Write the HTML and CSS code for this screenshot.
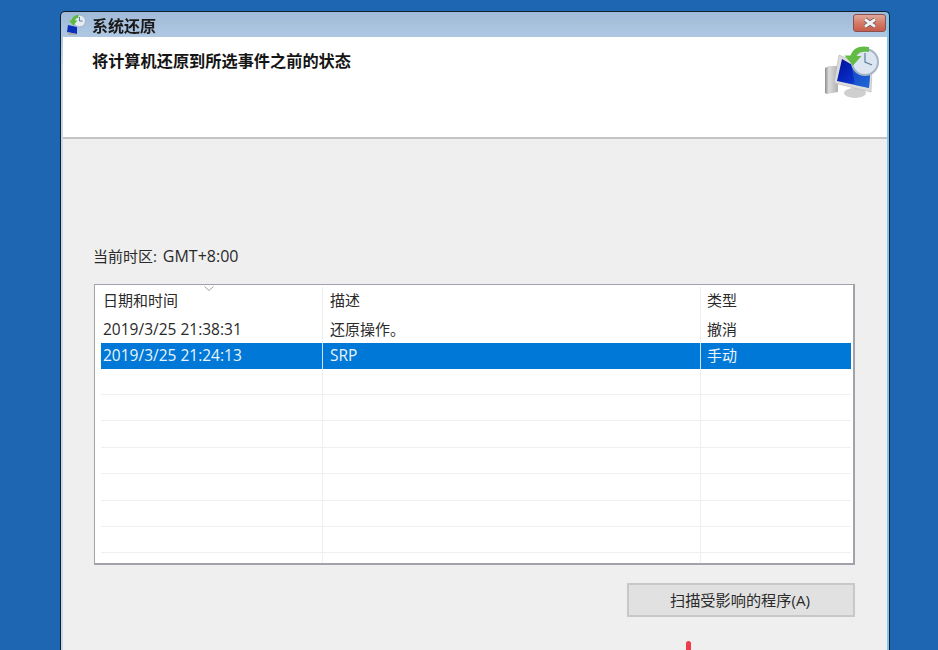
FILE: index.html
```html
<!DOCTYPE html>
<html lang="zh-CN">
<head>
<meta charset="utf-8">
<title>系统还原</title>
<link rel="stylesheet" href="styles.css">
</head>
<body>
<div class="window">
  <div class="titlebar">
    <svg class="title-icon" viewBox="0 0 20 22" width="20" height="22">
      <path d="M2 11l9 2v7l-10-2z" fill="#0a2fb8"/>
      <path d="M1 18l10 2-1 1H3z" fill="#a8a8a8"/>
      <circle cx="13.500" cy="7" r="6" fill="#e4ebf3" stroke="#9fb0c4"/>
      <path d="M13.500 3V7h3" fill="none" stroke="#5f7d9e"/>
      <path d="M12.500 1C8.500 1 6 3.500 5.500 6.500H3l4.200 5 4.300-5H9C9.500 5 10.700 4 12.500 3.800z" fill="#5dbb3c"/>
    </svg>
    <span class="title-text">系统还原</span>
    <button class="close" type="button" aria-label="关闭">
      <svg viewBox="0 0 16 12" width="16" height="12">
        <path d="M3 2.500 13 9.500M13 2.500 3 9.500" fill="none" stroke="#5c4e50" stroke-width="4.400"/>
        <path d="M3 2.500 13 9.500M13 2.500 3 9.500" fill="none" stroke="#f2f2f2" stroke-width="2.800"/>
      </svg>
    </button>
  </div>
  <div class="content">
    <header class="banner">
      <h1 class="heading">将计算机还原到所选事件之前的状态</h1>
      <svg class="banner-icon" viewBox="0 0 56 56" width="56" height="56">
        <defs>
          <linearGradient id="stand" x1="0" y1="0" x2="1" y2="0">
            <stop offset="0" stop-color="#8c8c8c"/><stop offset=".3" stop-color="#dcdcdc"/><stop offset="1" stop-color="#b0b0b0"/>
          </linearGradient>
          <linearGradient id="screen" x1="0" y1="0" x2="1" y2="1">
            <stop offset="0" stop-color="#00109a"/><stop offset=".6" stop-color="#0a30c8"/><stop offset="1" stop-color="#3d8de0"/>
          </linearGradient>
        </defs>
        <path d="M1 24l4-2h9v26l-11 2-2-1z" fill="url(#stand)"/>
        <ellipse cx="31" cy="49" rx="11" ry="5" fill="#cfcfcf"/>
        <path d="M15 11l33 14-1 23-37-9z" fill="#dcdcdc" stroke="#b4b4b4" stroke-width=".6"/>
        <path d="M18 15l28 16-1 13-32-7z" fill="url(#screen)"/>
        <path d="M27 19l19 12-1 13-14-3z" fill="#1c5fd0" opacity=".75"/>
        <circle cx="41" cy="18" r="13" fill="#dde6f0" stroke="#a4b4c8" stroke-width="2"/>
        <path d="M41 9v9l7 3" fill="none" stroke="#5f7d9e" stroke-width="1.200"/>
        <path d="M45 3C36 1 29 4 26.500 11.500H20.500l8.500 10 8.500-9.500H32.500C34.500 8.500 38 7 45 8z" fill="#62bb44"/>
      </svg>
    </header>
    <main class="body">
      <p class="timezone">当前时区: <span class="lat-tz">GMT+8:00</span></p>
      <div class="list">
        <span class="sort-arrow"><svg viewBox="0 0 10 5" width="10" height="5"><path d="M.5.500 5 4.500 9.500.500" fill="none" stroke="#a0a0a0"/></svg></span>
        <div class="row head"><div class="cell">日期和时间</div><div class="cell">描述</div><div class="cell">类型</div></div>
        <div class="row first"><div class="cell lat">2019/3/25 21:38:31</div><div class="cell">还原操作。</div><div class="cell">撤消</div></div>
        <div class="row selected"><div class="cell lat">2019/3/25 21:24:13</div><div class="cell lat">SRP</div><div class="cell">手动</div></div>
        <div class="row"><div class="cell"></div><div class="cell"></div><div class="cell"></div></div>
        <div class="row"><div class="cell"></div><div class="cell"></div><div class="cell"></div></div>
        <div class="row"><div class="cell"></div><div class="cell"></div><div class="cell"></div></div>
        <div class="row"><div class="cell"></div><div class="cell"></div><div class="cell"></div></div>
        <div class="row"><div class="cell"></div><div class="cell"></div><div class="cell"></div></div>
        <div class="row"><div class="cell"></div><div class="cell"></div><div class="cell"></div></div>
        <div class="row"><div class="cell"></div><div class="cell"></div><div class="cell"></div></div>
        <div class="row last"><div class="cell"></div><div class="cell"></div><div class="cell"></div></div>
      </div>
      <div class="actions"><button class="scan" type="button">扫描受影响的程序(A)</button></div>
    </main>
  </div>
</div>
<span class="pointer"></span>
</body>
</html>
```

FILE: styles.css
```css
* { box-sizing: border-box; }
html, body { height: 100%; }
body {
  margin: 0;
  padding: 11px 48px 0 60px;
  background: #1e66b2;
  overflow: hidden;
  font-family: "Open Sans", "Noto Sans CJK SC", sans-serif;
  font-size: 15px;
  color: #2a2a2a;
}
.window {
  width: 830px;
  height: 639px;
  display: flex;
  flex-direction: column;
  padding: 0 2px;
  background: linear-gradient(#a0bad8, #b8d0e8 40px, #c8d8ec 60px);
  border: 1px solid #10202e;
  border-bottom: 0;
  border-radius: 5px 5px 0 0;
  box-shadow: inset -2px 0 0 #7cc8ee;
  filter: blur(.3px);
}
.titlebar {
  flex: none;
  height: 25px;
  display: flex;
  align-items: center;
  gap: 6px;
  padding: 0 0 0 3px;
}
.title-icon { flex: none; }
.title-text {
  font-size: 16px;
  line-height: 20px;
  color: #1a1a1a;
  font-family: "Noto Sans CJK SC", sans-serif;
  font-weight: 700;
}
.close {
  flex: none;
  width: 33px;
  height: 18px;
  margin-left: auto;
  margin-right: 1px;
  margin-top: -3px;
  padding: 0;
  display: flex;
  align-items: center;
  justify-content: center;
  background: linear-gradient(#e0a89c, #d47c68 50%, #c85c48);
  border: 1px solid #8a5050;
  border-radius: 3px;
}
.content {
  flex: 1;
  display: flex;
  flex-direction: column;
  background: #efefef;
}
.banner {
  flex: none;
  height: 102px;
  display: flex;
  justify-content: space-between;
  align-items: flex-start;
  padding: 0 7px 0 29px;
  background: #ffffff;
  border-bottom: 2px solid #c4c4c4;
}
.heading {
  margin: 13px 0 0;
  font-size: 16.2px;
  line-height: 20px;
  font-weight: 700;
  color: #151515;
  font-family: "Noto Sans CJK SC", sans-serif;
}
.banner-icon { flex: none; margin-top: 7px; }
.body {
  flex: 1;
  display: flex;
  flex-direction: column;
  padding: 106px 32px 0 31px;
}
.timezone {
  margin: 0 0 17px -1px;
  font-size: 15px;
  line-height: 22px;
}
.lat-tz { font-size: 16px; margin-left: 2px; }
.list {
  position: relative;
  height: 281px;
  padding: 2px 2px 0 6px;
  background: #ffffff;
  border: 2px solid #a2a2aa;
  border-width: 1px 2px 2px 1px;
  overflow: hidden;
}
.sort-arrow {
  position: absolute;
  left: 109px;
  top: 0;
  line-height: 0;
}
.row {
  display: grid;
  grid-template-columns: 222px 378px 150px;
  height: 26.400px;
  line-height: 25px;
  border-bottom: 1px solid #f0f0f0;
}
.row.head { height: 29px; line-height: 26px; border-bottom: 0; }
.row.first { height: 27px; line-height: 26px; border-bottom: 0; }
.row.last { height: 11px; border-bottom: 0; }
.cell {
  padding-left: 2px;
  border-right: 1px solid #eeeeee;
  white-space: nowrap;
}
.cell.lat { font-size: 15.5px; }
.cell + .cell { padding-left: 7px; }
.cell:last-child { border-right: 0; padding-left: 6px; }
.row.selected {
  height: 25.600px;
  background: #0078d7;
  color: #eaf4fc;
  border-bottom: 0;
}
.row.selected .cell { border-right-color: #cfe4f6; }
.actions {
  display: flex;
  justify-content: flex-end;
  margin-top: 18px;
}
.scan {
  width: 228px;
  height: 34px;
  padding: 0 2px 3px 0;
  background: #e1e1e1;
  border: 2px solid #c8c8c8;
  font: inherit;
  font-size: 15.2px;
  color: #2a2a2a;
}
.pointer {
  position: absolute;
  left: 686px;
  top: 641px;
  width: 5px;
  height: 9px;
  border-radius: 3px 3px 0 0;
  background: #f03a4a;
}
```
